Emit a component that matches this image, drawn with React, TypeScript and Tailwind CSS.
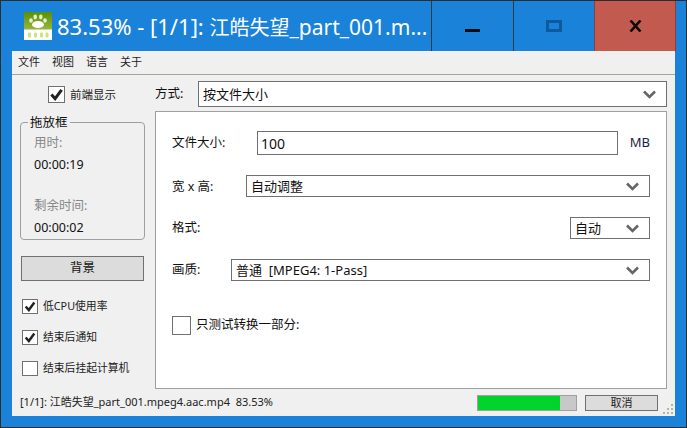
const font = { fontFamily: '"Noto Sans", "Noto Sans CJK SC", sans-serif' };

function Chevron() {
  return (
    <svg width="13" height="9" viewBox="0 0 13 9" className="shrink-0">
      <path d="M1 1.5 L6.5 7 L12 1.5" fill="none" stroke="#666" strokeWidth="2.6" />
    </svg>
  );
}

function Check({ width, height, checked, className }: { width: number; height: number; checked: boolean; className?: string }) {
  return (
    <span
      className={`flex items-center justify-center shrink-0 bg-white border border-[#707070] ${className ?? ""}`}
      style={{ width, height }}
    >
      {checked && (
        <svg width={width - 4} height={height - 4} viewBox="0 0 14 14">
          <path d="M1.5 7 L5.5 11.5 L12.5 2" fill="none" stroke="#222" strokeWidth="3.2" />
        </svg>
      )}
    </span>
  );
}

function Combo({ label, className }: { label: string; className: string }) {
  return (
    <div className={`flex items-center justify-between bg-white border border-[#707070] h-[22px] pl-[4px] pr-[10px] text-[13px] text-[#111] ${className}`}>
      <span className="whitespace-pre pt-[1px]">{label}</span>
      <Chevron />
    </div>
  );
}

function SideCheck({ label, checked, className }: { label: string; checked: boolean; className: string }) {
  return (
    <div className={`flex items-center gap-[5px] h-[16px] text-[10.8px] text-[#222] ${className}`}>
      <Check width={16} height={15} checked={checked} />
      <span className="pt-[1px]">{label}</span>
    </div>
  );
}

function PawIcon() {
  return (
    <svg width="28" height="28" viewBox="0 0 28 28" className="shrink-0">
      <defs>
        <linearGradient id="pawbg" x1="0" y1="0" x2="0" y2="1">
          <stop offset="0" stopColor="#5a8f06" />
          <stop offset="1" stopColor="#93b83c" />
        </linearGradient>
      </defs>
      <rect width="28" height="28" fill="#fff" />
      <rect width="28" height="17.5" fill="url(#pawbg)" />
      <ellipse cx="14" cy="12.5" rx="6" ry="3.6" fill="#fff" />
      <ellipse cx="7" cy="8.5" rx="1.8" ry="2.2" fill="#e4eed0" />
      <ellipse cx="11.2" cy="5" rx="1.8" ry="2.4" fill="#e4eed0" />
      <ellipse cx="16.8" cy="5" rx="1.8" ry="2.4" fill="#e4eed0" />
      <ellipse cx="21" cy="8.5" rx="1.8" ry="2.2" fill="#e4eed0" />
      <rect x="4" y="20.5" width="3" height="5" rx="1" fill="#cfe27c" />
      <rect x="10" y="20.5" width="3" height="5" rx="1" fill="#cfe27c" />
      <rect x="16" y="20.5" width="3" height="5" rx="1" fill="#cfe27c" />
      <rect x="21.5" y="20.5" width="3" height="5" rx="1" fill="#cfe27c" />
    </svg>
  );
}

export default function App() {
  return (
    <div style={font} className="w-[687px] h-[428px] flex flex-col bg-[#1a82d9] border border-[#2d2d2d] overflow-hidden">
      {/* Title bar */}
      <div className="h-[50px] flex shrink-0">
        <div className="flex-1 flex items-center pl-[23px] gap-[5px] min-w-0">
          <PawIcon />
          <span className="text-[20px] text-white whitespace-nowrap leading-none">
            <span className="text-[22px]">83.53% - [1/1]: </span>
            江皓失望
            <span className="text-[21px]">_part_001.m...</span>
          </span>
        </div>
        <div className="w-[82px] h-[51px] border-l border-b border-[#2d3a48] flex items-center justify-center">
          <span className="block w-[15px] h-[3px] bg-[#0a0a0a] mt-[8px]" />
        </div>
        <div className="w-[81px] h-[51px] border-l border-b border-[#2d3a48] flex items-center justify-center">
          <span className="block w-[16px] h-[12px] border-[3px] border-[#0f5a9c] -mt-[1px]" />
        </div>
        <div className="w-[82px] h-[51px] bg-[#c35a50] border-x border-b border-[#8a3f38] flex items-center justify-center">
          <svg width="13" height="12" viewBox="0 0 13 12" className="-mt-[1px]">
            <path d="M1.5 0.5 L11.5 11.5 M11.5 0.5 L1.5 11.5" stroke="#0a0a0a" strokeWidth="2.6" />
          </svg>
        </div>
        <div className="w-[10px]" />
      </div>

      {/* Client area */}
      <div className="mx-[11px] w-[663px] h-[365px] bg-[#f0f0f0] flex flex-col shrink-0 text-[#111]">
        <div className="h-[24px] border-b border-[#a5a59a] flex items-center gap-[12px] pl-[6px] text-[11px] text-[#222] shrink-0">
          <span>文件</span>
          <span>视图</span>
          <span>语言</span>
          <span>关于</span>
        </div>

        <div className="flex flex-1 min-h-0">
          {/* Left column */}
          <div className="w-[143px] shrink-0 flex flex-col">
            <div className="flex items-center gap-[5px] pl-[36px] pt-[11px] h-[28px] text-[11.5px] text-[#222]">
              <Check width={17} height={17} checked />
              <span>前端显示</span>
            </div>
            <div className="relative ml-[8px] mt-[19px] w-[125px] h-[118px] border border-[#9aa0a0] rounded-[4px] pl-[13px] pt-[11px] text-[12.5px]">
              <span className="absolute -top-[9px] left-[7px] px-[2px] bg-[#f0f0f0] text-[12.5px] leading-[18px]">拖放框</span>
              <div className="text-[#888] leading-[18px]">用时:</div>
              <div className="mt-[4px] leading-[18px]">00:00:19</div>
              <div className="mt-[23px] text-[#888] leading-[18px]">剩余时间:</div>
              <div className="mt-[4px] leading-[18px]">00:00:02</div>
            </div>
            <button className="ml-[9px] mt-[16px] w-[123px] h-[25px] bg-[#dcdcdc] border border-[#707070] text-[12.5px] leading-none">背景</button>
            <SideCheck label="低CPU使用率" checked className="ml-[10px] mt-[17px]" />
            <SideCheck label="结束后通知" checked className="ml-[10px] mt-[15px]" />
            <SideCheck label="结束后挂起计算机" checked={false} className="ml-[10px] mt-[15px]" />
          </div>

          {/* Right column */}
          <div className="flex-1 flex flex-col pr-[8px] min-w-0">
            <div className="flex items-center pt-[6px] pb-[4px] h-[36px] shrink-0 text-[12.5px]">
              <span className="w-[43px]">方式:</span>
              <Combo label="按文件大小" className="flex-1 h-[26px]" />
            </div>
            <div className="h-[279px] bg-white border border-[#a0a0a0] px-[16px] flex flex-col text-[12.5px]">
              <div className="flex items-center mt-[19px] h-[24px]">
                <span className="w-[85px] pt-[1px]">文件大小:</span>
                <div className="w-[361px] h-[24px] border border-[#707070] flex items-center pl-[3px] text-[14px]">100</div>
                <span className="ml-auto text-[13px] text-[#224]">MB</span>
              </div>
              <div className="flex items-center mt-[20px] h-[22px]">
                <span className="w-[74px] pt-[2px]">宽 x 高:</span>
                <Combo label="自动调整" className="flex-1" />
              </div>
              <div className="flex items-center mt-[20px] h-[22px]">
                <span>格式:</span>
                <Combo label="自动" className="w-[80px] ml-auto" />
              </div>
              <div className="flex items-center mt-[20px] h-[22px]">
                <span className="w-[59px] pt-[1px]">画质:</span>
                <Combo label="普通  [MPEG4: 1-Pass]" className="flex-1" />
              </div>
              <div className="flex items-center mt-[35px] gap-[5px]">
                <Check width={19} height={19} checked={false} />
                <span>只测试转换一部分:</span>
              </div>
            </div>
          </div>
        </div>

        {/* Status bar */}
        <div className="relative h-[27px] flex items-center pl-[8px] pr-[17px] text-[11px] text-[#222] shrink-0">
          <span className="whitespace-pre">[1/1]: 江皓失望_part_001.mpeg4.aac.mp4  83.53%</span>
          <div className="ml-auto w-[100px] h-[16px] bg-[#c8c8c8] border border-[#a0a0a0]">
            <div className="h-full bg-[#00d32a]" style={{ width: "83.53%" }} />
          </div>
          <button className="ml-[8px] w-[73px] h-[16px] bg-[#dcdcdc] border border-[#707070] text-[11px] leading-none">取消</button>
          <svg width="11" height="11" viewBox="0 0 11 11" className="absolute right-[1px] bottom-[1px]">
            <g fill="#b4b4a8">
              <rect x="8" y="0" width="2" height="2" />
              <rect x="4" y="4" width="2" height="2" />
              <rect x="8" y="4" width="2" height="2" />
              <rect x="0" y="8" width="2" height="2" />
              <rect x="4" y="8" width="2" height="2" />
              <rect x="8" y="8" width="2" height="2" />
            </g>
          </svg>
        </div>
      </div>
    </div>
  );
}
